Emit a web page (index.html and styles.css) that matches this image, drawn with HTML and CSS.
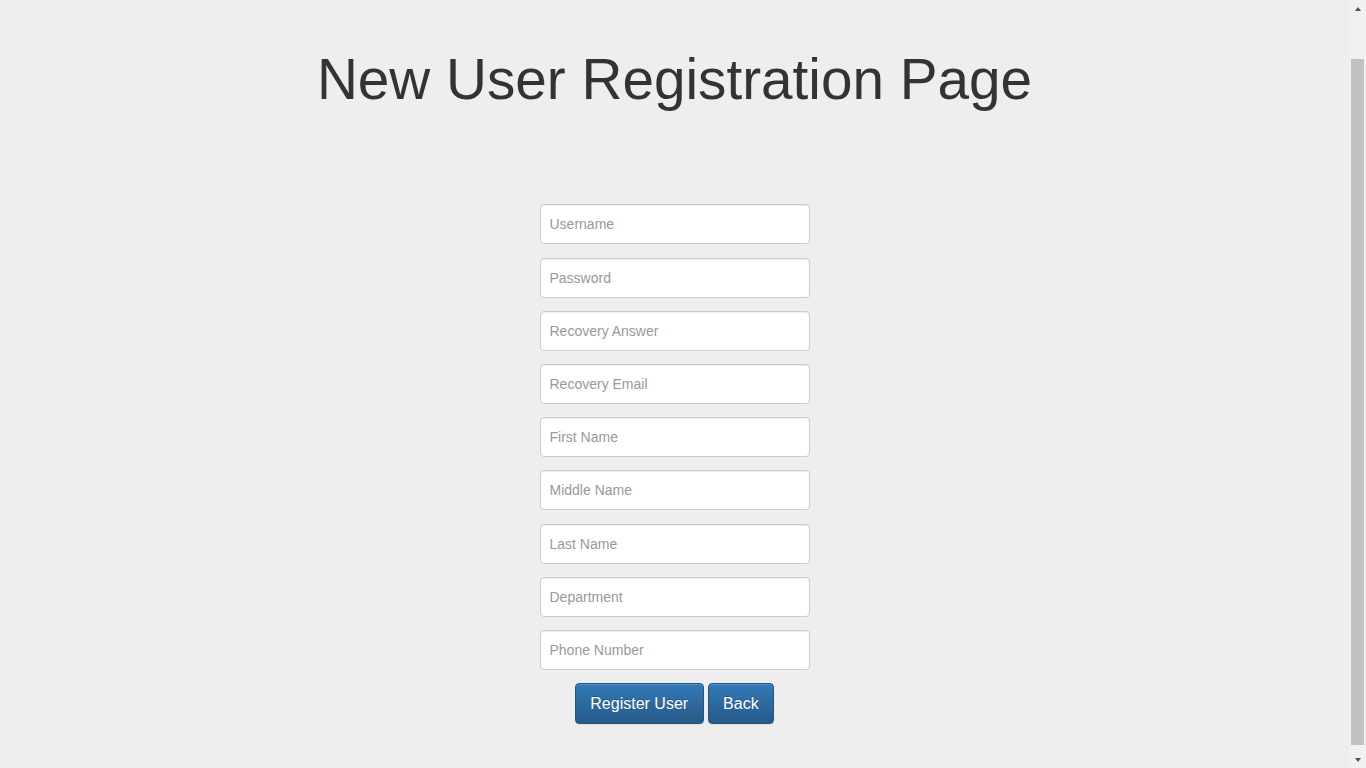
FILE: index.html
```html
<!DOCTYPE html>
<html lang="en">
<head>
<meta charset="utf-8">
<title>New User Registration Page</title>
<link rel="stylesheet" href="styles.css">
</head>
<body>
<div class="page">
  <h1 class="title">New User Registration Page</h1>
  <form class="reg-form">
    <input class="field" type="text" placeholder="Username">
    <input class="field" type="password" placeholder="Password">
    <input class="field" type="text" placeholder="Recovery Answer">
    <input class="field" type="email" placeholder="Recovery Email">
    <input class="field" type="text" placeholder="First Name">
    <input class="field" type="text" placeholder="Middle Name">
    <input class="field" type="text" placeholder="Last Name">
    <input class="field" type="text" placeholder="Department">
    <input class="field" type="text" placeholder="Phone Number">
    <div class="actions">
      <button class="btn" type="button">Register User</button>
      <button class="btn" type="button">Back</button>
    </div>
  </form>
</div>
<div class="scrollbar" aria-hidden="true">
  <div class="sb-btn"><span class="sb-arrow-up"></span></div>
  <div class="sb-track"><div class="sb-thumb"></div></div>
  <div class="sb-btn"><span class="sb-arrow-down"></span></div>
</div>
</body>
</html>
```

FILE: styles.css
```css
html {
  overflow: hidden;
}
body {
  margin: 0;
  height: 100vh;
  display: flex;
  background: #eeeeee;
  color: #333333;
  font-family: "Liberation Sans", Arial, Helvetica, sans-serif;
  font-size: 14px;
}
.page {
  flex: 1;
  display: flex;
  flex-direction: column;
  align-items: center;
  padding-top: 49px;
}
.title {
  margin: 0;
  font-size: 56.7px;
  font-weight: 400;
  line-height: 1.1;
  color: #333333;
}
.reg-form {
  margin-top: 93px;
  width: 270px;
  display: flex;
  flex-direction: column;
  gap: 13.22px;
}
.field {
  box-sizing: border-box;
  width: 270px;
  height: 40px;
  margin: 0;
  padding: 6px 9px;
  border: 1px solid #cccccc;
  border-radius: 4px;
  background: #ffffff;
  font-family: inherit;
  font-size: 14px;
  color: #555555;
  box-shadow: inset 0 1px 1px rgba(0, 0, 0, 0.075);
}
.field::placeholder {
  color: #999999;
}
.actions {
  display: flex;
  justify-content: center;
  gap: 4px;
}
.btn {
  box-sizing: border-box;
  height: 41px;
  padding: 0 14.5px;
  border: 1px solid #245580;
  border-radius: 4px;
  background: linear-gradient(to bottom, #337ab7 0%, #265a88 100%);
  color: #ffffff;
  font-family: inherit;
  font-size: 16px;
  box-shadow: inset 0 1px 0 rgba(255, 255, 255, 0.15), 0 1px 1px rgba(0, 0, 0, 0.075);
  text-shadow: 0 -1px 0 rgba(0, 0, 0, 0.2);
  cursor: pointer;
}

/* window scrollbar */
.scrollbar {
  width: 17px;
  flex: 0 0 17px;
  display: flex;
  flex-direction: column;
  background: #f1f1f1;
}
.sb-btn {
  height: 17px;
  flex: 0 0 17px;
  display: flex;
  align-items: center;
  justify-content: center;
}
.sb-arrow-up,
.sb-arrow-down {
  width: 0;
  height: 0;
  border-left: 3.5px solid transparent;
  border-right: 3.5px solid transparent;
}
.sb-arrow-up {
  border-bottom: 4px solid #505050;
}
.sb-arrow-down {
  border-top: 4px solid #505050;
}
.sb-track {
  flex: 1;
  display: flex;
  flex-direction: column;
  padding: 42px 2px 6px;
}
.sb-thumb {
  flex: 1;
  background: #c1c1c1;
}
```
